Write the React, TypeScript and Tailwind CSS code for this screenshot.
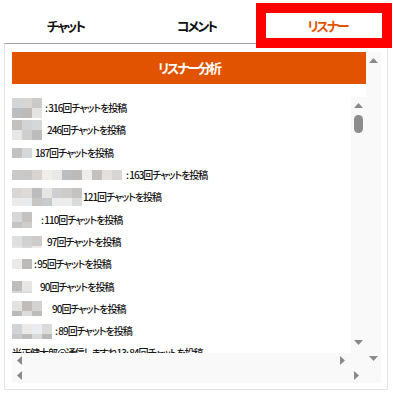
import React from "react";

type Row = {
  w: number;
  h: number;
  gap: number;
  seed: number;
  text: string;
};

const rows: Row[] = [
  { w: 31, h: 20, gap: 2, seed: 3, text: ": 316回チャットを投稿" },
  { w: 31, h: 20, gap: 4, seed: 7, text: "246回チャットを投稿" },
  { w: 23, h: 10, gap: 0, seed: 11, text: "187回チャットを投稿" },
  { w: 113, h: 10, gap: 1, seed: 19, text: ": 163回チャットを投稿" },
  { w: 71, h: 18, gap: 0, seed: 23, text: "121回チャットを投稿" },
  { w: 28, h: 16, gap: 1, seed: 29, text: ": 110回チャットを投稿" },
  { w: 33, h: 12, gap: 2, seed: 31, text: "97回チャットを投稿" },
  { w: 22, h: 10, gap: 0, seed: 37, text: ": 95回チャットを投稿" },
  { w: 25, h: 12, gap: 3, seed: 41, text: "90回チャットを投稿" },
  { w: 38, h: 15, gap: 2, seed: 43, text: "90回チャットを投稿" },
  { w: 43, h: 15, gap: 0, seed: 47, text: ": 89回チャットを投稿" },
];

// blurred name placeholder colours
function cellColor(seed: number, i: number) {
  const r = Math.abs(Math.sin(seed * 12.9898 + i * 78.233) * 43758.5453) % 1;
  const t = Math.abs(Math.sin(seed * 3.7 + i * 11.1) * 9173.13) % 1;
  const g = Math.round(184 + r * 54);
  const tint = Math.round((t - 0.5) * 8);
  return `rgb(${g + tint}, ${g}, ${g - tint})`;
}

function Mosaic({ w, h, seed }: { w: number; h: number; seed: number }) {
  const cols = Math.ceil(w / 10);
  const lines = Math.ceil(h / 10);
  const cells = Array.from({ length: cols * lines });
  return (
    <div className="flex flex-wrap shrink-0 overflow-hidden" style={{ width: w, height: h }}>
      {cells.map((_, i) => (
        <div
          key={i}
          className="w-[10px] h-[10px] shrink-0"
          style={{ backgroundColor: cellColor(seed, i) }}
        />
      ))}
    </div>
  );
}

function Tri({ dir }: { dir: "up" | "down" | "left" | "right" }) {
  const vertical = dir === "up" || dir === "down";
  const pts = {
    up: "0,5 4.5,0 9,5",
    down: "0,0 9,0 4.5,5",
    left: "5,0 5,9 0,4.5",
    right: "0,0 5,4.5 0,9",
  }[dir];
  return (
    <svg width={vertical ? 9 : 5} height={vertical ? 5 : 9} viewBox={vertical ? "0 0 9 5" : "0 0 5 9"}>
      <polygon points={pts} fill="#8a8a8a" />
    </svg>
  );
}

function HScroll({ right }: { right: string }) {
  return (
    <div className={`flex-1 h-[15px] bg-[#f9f9f9] flex items-center justify-between pl-[5px] ${right}`}>
      <Tri dir="left" />
      <Tri dir="right" />
    </div>
  );
}

export default function App() {
  return (
    <div className="relative w-[393px] h-[397px] bg-white overflow-hidden font-['Noto_Sans_CJK_JP','Noto_Sans',sans-serif] [font-feature-settings:'palt']">
      {/* tabs */}
      <div className="flex h-[43px]">
        <div className="flex-1 flex items-center justify-center pt-[8px] text-[13px] tracking-[-2px] font-bold text-[#111]">
          チャット
        </div>
        <div className="flex-1 flex items-center justify-center pt-[8px] text-[13px] tracking-[-2px] font-bold text-[#111]">
          コメント
        </div>
        <div className="flex-1 flex items-center justify-center pt-[8px] text-[13px] tracking-[-2px] font-bold text-[#e25300]">
          リスナー
        </div>
      </div>

      {/* panel */}
      <div className="ml-[4px] w-[384px] h-[347px] border border-[#e3e3e3] border-t-[#a0a0a0] pt-[8px] pl-[7px] pr-[6px] pb-[6px]">
        <div className="flex flex-col w-[369px] h-[331px]">
          <div className="flex h-[316px]">
            <div className="w-[354px] flex flex-col">
              <div className="h-[32px] bg-[#e25300] flex items-center justify-center text-white text-[13px] tracking-[-2px] font-bold">
                リスナー分析
              </div>

              {/* inner scroll box */}
              <div className="mt-[13px] flex flex-col h-[271px]">
                <div className="flex h-[256px]">
                  <div className="w-[339px] overflow-hidden">
                    {rows.map((r, i) => (
                      <div key={i} className="h-[22.3px] flex items-center whitespace-nowrap">
                        <Mosaic w={r.w} h={r.h} seed={r.seed} />
                        <span
                          className="text-[10px] tracking-[-1px] font-medium text-[#161616] leading-none"
                          style={{ marginLeft: r.gap }}
                        >
                          {r.text}
                        </span>
                      </div>
                    ))}
                    <div className="h-[22.3px] flex items-center whitespace-nowrap text-[10px] tracking-[-1px] font-medium text-[#161616] leading-none">
                      米正健太郎@通信しますね13: 84回チャットを投稿
                    </div>
                  </div>
                  <div className="w-[15px] bg-[#f9f9f9] flex flex-col items-center pt-[6px] pb-[8px]">
                    <Tri dir="up" />
                    <div className="mt-[7px] w-[9px] h-[18px] rounded-full bg-[#8c8c8c]" />
                    <div className="flex-1" />
                    <Tri dir="down" />
                  </div>
                </div>
                <div className="flex">
                  <HScroll right="pr-[6px]" />
                  <div className="w-[15px] h-[15px] bg-[#f9f9f9]" />
                </div>
              </div>
            </div>
            <div className="w-[15px] bg-[#f9f9f9] flex flex-col items-center justify-between pt-[6px] pb-[7px]">
              <Tri dir="up" />
              <Tri dir="down" />
            </div>
          </div>
          <div className="flex">
            <HScroll right="pr-[7px]" />
            <div className="w-[15px] h-[15px] bg-[#f9f9f9]" />
          </div>
        </div>
      </div>

      {/* highlight box */}
      <div className="absolute left-[256px] top-[3px] w-[136px] h-[45px] border-[10px] border-[#ff0000]" />
    </div>
  );
}
